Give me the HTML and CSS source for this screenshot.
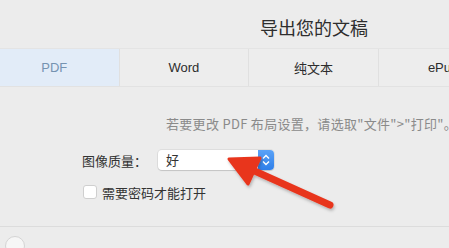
FILE: index.html
```html
<!DOCTYPE html>
<html>
	<head>
		<meta charset="UTF-8">
		<title>导出您的文稿</title>
		<link rel="stylesheet" href="styles.css">
	</head>
	<body>
		<div class="sheet">
			<h3 class="title">导出您的文稿</h3>
			<div class="tabs">
				<div class="tab on">PDF</div>
				<div class="tab">Word</div>
				<div class="tab">纯文本</div>
				<div class="tab">ePub</div>
				<div class="tab">Pages ’09</div>
			</div>
			<div class="content">
				<p class="hint">若要更改 PDF 布局设置，请选取"文件"&gt;"打印"。</p>
				<div class="row">
					<label>图像质量：</label>
					<div class="popup">
						<span>好</span>
						<i class="stepper">
							<svg width="16" height="20" viewBox="0 0 16 20">
								<path d="M5 8.5 L8 5.5 L11 8.5 M5 11.5 L8 14.5 L11 11.5" fill="none" stroke="#fff" stroke-width="1.4"/>
							</svg>
						</i>
					</div>
				</div>
				<div class="check">
					<span class="box"></span>
					<span>需要密码才能打开</span>
				</div>
			</div>
			<div class="footer">
				<span class="help"></span>
			</div>
		</div>
		<!-- 红色箭头 -->
		<svg class="arrow" width="449" height="248" viewBox="0 0 449 248">
			<defs>
				<filter id="sh" x="-20%" y="-20%" width="140%" height="140%">
					<feDropShadow dx="1" dy="2" stdDeviation="1.5" flood-color="#000" flood-opacity="0.25"/>
				</filter>
			</defs>
			<g filter="url(#sh)" fill="#e8361f" stroke="#e8361f" stroke-linejoin="round" stroke-linecap="round">
				<line x1="330" y1="205" x2="248" y2="168" stroke-width="7"/>
				<polygon points="229,159 260,158 248,184" stroke-width="3"/>
			</g>
		</svg>
	</body>
</html>
```

FILE: styles.css
```css
*{
	margin: 0;
	padding: 0;
	box-sizing: border-box;
}
body{
	width: 449px;
	height: 248px;
	overflow: hidden;
	background: #ececec;
	font-family: "Liberation Sans", "Noto Sans CJK SC", sans-serif;
	color: #333;
}
.sheet{
	width: 648px;
	margin-left: -10px;
}
.title{
	font-family: "Noto Sans CJK SC", sans-serif;
	font-size: 18px;
	font-weight: normal;
	line-height: 26px;
	text-align: center;
	padding-top: 14px;
	margin-bottom: 8px;
	color: #2e2e2e;
}
.tabs{
	display: flex;
	height: 39px;
	border-top: 1px solid #e4e4e4;
	border-bottom: 1px solid #e2e2e2;
}
.tab{
	flex: 1;
	display: flex;
	align-items: center;
	justify-content: center;
	font-size: 13px;
	color: #2c2c2c;
	border-right: 1px solid #e0e0e0;
	background: #ededed;
}
.tab.on{
	background: #e2ecf8;
	color: #7593b1;
}
.content{
	padding-left: 92px;
}
.hint{
	margin-top: 28px;
	padding-left: 84px;
	font-size: 13px;
	letter-spacing: 0.3px;
	line-height: 18px;
	color: #8a8a8a;
	white-space: nowrap;
	font-family: "Noto Sans CJK SC", sans-serif;
}
.row{
	display: flex;
	align-items: center;
	margin-top: 17px;
	height: 20px;
}
.row label{
	width: 76px;
	font-size: 13px;
	font-family: "Noto Sans CJK SC", sans-serif;
	color: #333;
}
.popup{
	display: flex;
	width: 116px;
	height: 20px;
	background: #fff;
	border-radius: 4px;
	box-shadow: 0 0 0 1px rgba(0,0,0,0.06), 0 1px 1px rgba(0,0,0,0.12);
	overflow: hidden;
}
.popup span{
	flex: 1;
	padding-left: 8px;
	font-size: 13px;
	line-height: 20px;
	font-family: "Noto Sans CJK SC", sans-serif;
}
.stepper{
	width: 16px;
	height: 20px;
	background: linear-gradient(#5aa2f7, #2f7fe9);
	display: block;
}
.check{
	display: flex;
	align-items: center;
	margin-top: 14px;
	height: 16px;
	font-size: 13px;
	font-family: "Noto Sans CJK SC", sans-serif;
	color: #333;
}
.box{
	width: 14px;
	height: 14px;
	margin: 0 5px 0 1px;
	background: #fff;
	border: 1px solid #cfcfcf;
	border-radius: 3px;
}
.footer{
	margin-top: 26px;
	border-top: 1px solid #dcdcdc;
	height: 30px;
	padding: 9px 0 0 15px;
}
.help{
	display: block;
	width: 20px;
	height: 20px;
	border-radius: 50%;
	background: #f6f6f6;
	border: 1px solid #d4d4d4;
}
.arrow{
	position: absolute;
	left: 0;
	top: 0;
}
```
